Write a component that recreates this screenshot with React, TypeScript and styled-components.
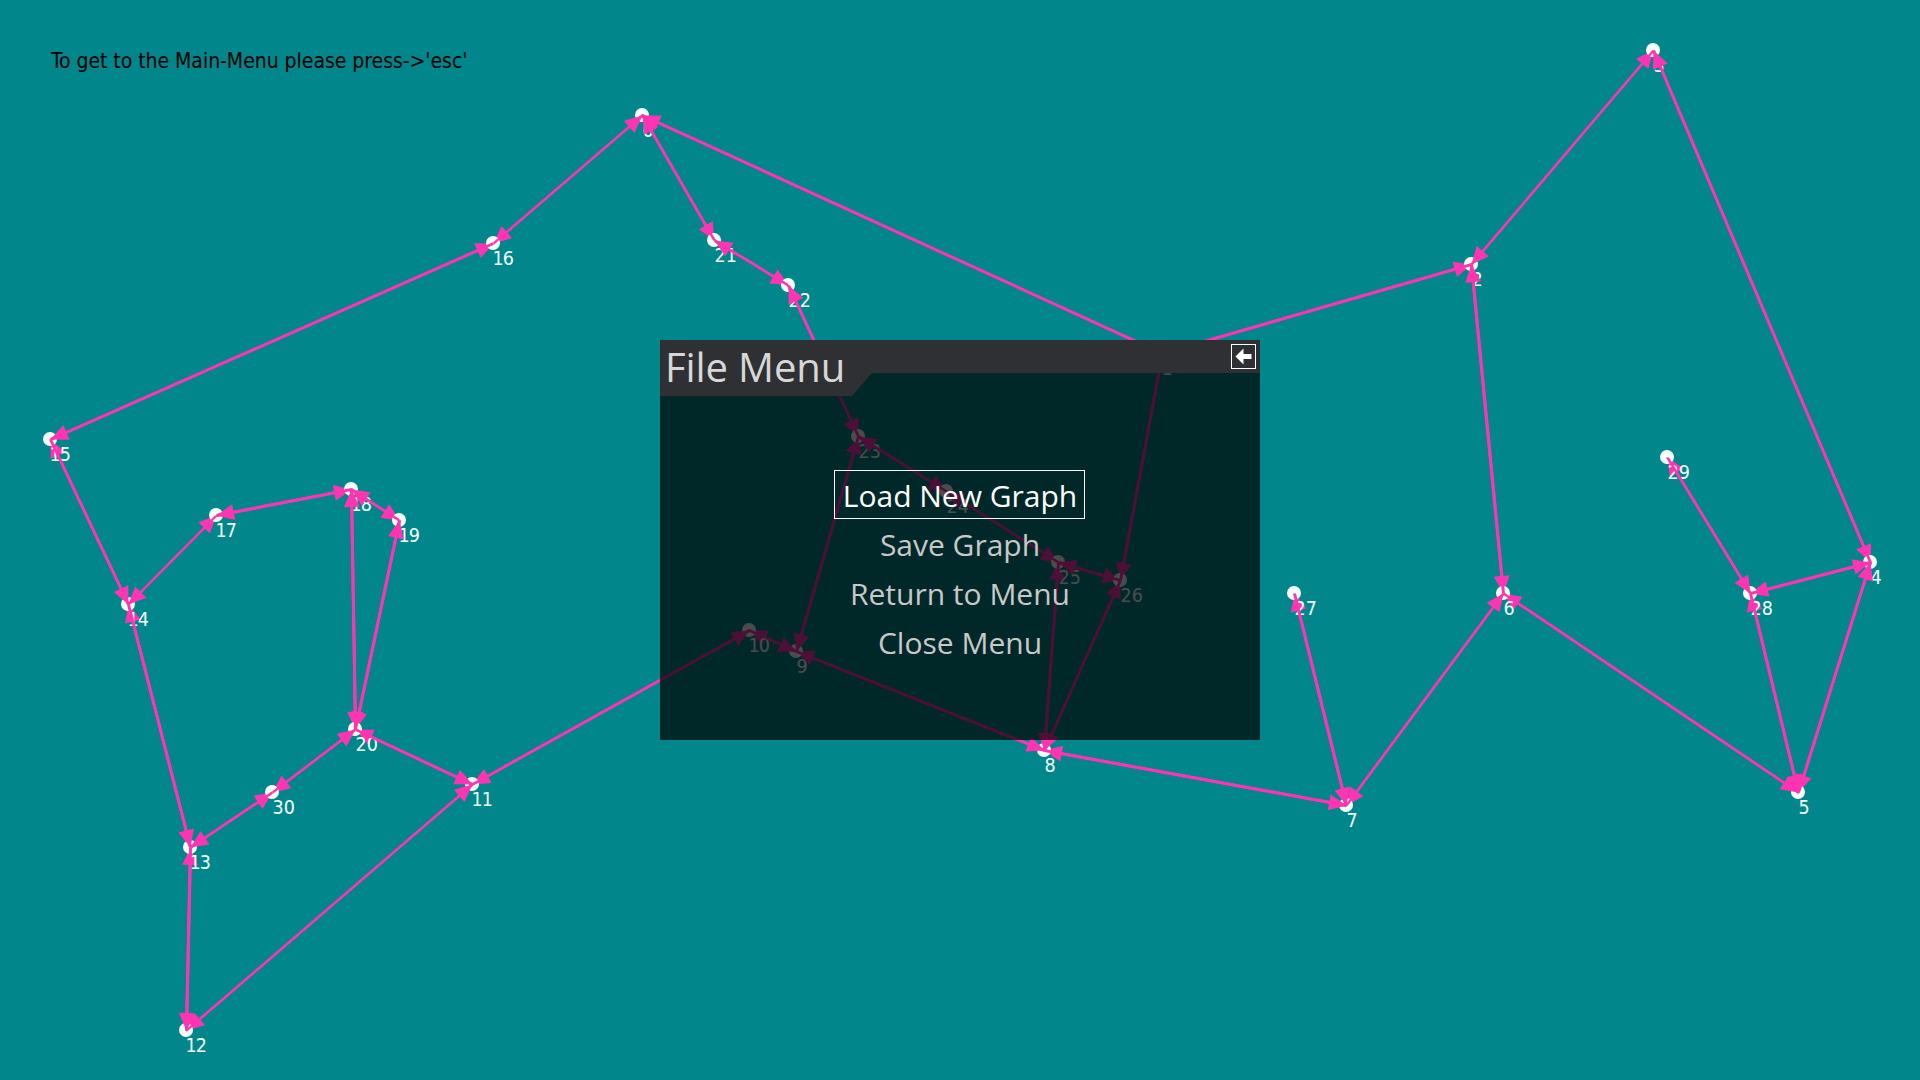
import React from "react";
import styled, { createGlobalStyle } from "styled-components";

const GlobalStyle = createGlobalStyle`
  body { margin: 0; background: #00868b; overflow: hidden; }
`;

const TEAL = "#00868b";
const PINK = "#ff34b3";
const MINT = "#f5fffa";
const HAND = `"Comic Sans MS", "DejaVu Sans Condensed", "DejaVu Sans", sans-serif`;

const Screen = styled.main`
  position: relative;
  display: grid;
  place-items: center;
  width: 1920px;
  height: 1080px;
  overflow: hidden;
  background: ${TEAL};
`;

const GraphCanvas = styled.svg`
  position: absolute;
  inset: 0;
  width: 1920px;
  height: 1080px;
`;

const NodeLabel = styled.text<{ $narrow: boolean }>`
  font-family: ${HAND};
  font-stretch: condensed;
  font-size: 19.5px;
  letter-spacing: ${(p) => (p.$narrow ? "-1px" : "0.2px")};
  fill: ${MINT};
`;

const Hint = styled.p`
  position: absolute;
  left: 51px;
  top: 46px;
  margin: 0;
  font-family: ${HAND};
  font-stretch: condensed;
  font-size: 21px;
  line-height: 30px;
  letter-spacing: -0.03px;
  white-space: nowrap;
  color: #000;
`;

const MenuWindow = styled.section`
  position: relative;
  display: flex;
  flex-direction: column;
  width: 600px;
  height: 400px;
  background: rgba(0, 0, 0, 0.7);
  font-family: "Open Sans", "Noto Sans", sans-serif;
`;

const TitleBar = styled.header`
  display: flex;
  justify-content: space-between;
  align-items: flex-start;
  height: 56px;
  box-sizing: border-box;
  padding: 4px 4px 0 5px;
  background: #2f3034;
  clip-path: polygon(0 0, 100% 0, 100% 33px, 212px 33px, 192px 100%, 0 100%);
`;

const Title = styled.h1`
  margin: 0;
  font-size: 40px;
  font-weight: 400;
  line-height: 46px;
  letter-spacing: -0.12px;
  color: #d7d7d7;
`;

const BackButton = styled.button`
  display: grid;
  place-items: center;
  width: 25px;
  height: 25px;
  padding: 0;
  border: 1px solid #fff;
  background: transparent;
`;

const MenuList = styled.nav`
  flex: 1;
  display: flex;
  flex-direction: column;
  align-items: center;
  padding: 74px 1px 0 0;
`;

const MenuItem = styled.button<{ $selected?: boolean }>`
  box-sizing: border-box;
  height: 49px;
  padding: 3px 7px 0 8px;
  border: 1px solid ${(p) => (p.$selected ? "#fff" : "transparent")};
  background: transparent;
  font: 400 30px/44px "Open Sans", "Noto Sans", sans-serif;
  color: ${(p) => (p.$selected ? "#fff" : "#c8c8c8")};
`;

const NODES: [number, number][] = [
  [642, 115], [1162, 353], [1471, 264], [1653, 50], [1870, 562],
  [1798, 792], [1503, 593], [1346, 805], [1044, 750], [796, 651],
  [749, 630], [472, 784], [186, 1030], [190, 847], [128, 604],
  [50, 439], [493, 243], [216, 515], [351, 489], [399, 520],
  [355, 729], [714, 240], [788, 285], [858, 436], [946, 491],
  [1058, 562], [1120, 580], [1294, 593], [1750, 593], [1667, 457],
  [272, 792],
];

const EDGES: [number, number][] = [
  [0, 1], [0, 16], [0, 21], [1, 2], [1, 26], [2, 3], [2, 6], [3, 4],
  [4, 5], [4, 28], [5, 6], [5, 28], [6, 7], [7, 8], [7, 27], [8, 9],
  [8, 25], [8, 26], [9, 10], [9, 23], [10, 11], [11, 12], [11, 20],
  [12, 13], [13, 14], [13, 30], [14, 15], [14, 17], [15, 16], [17, 18],
  [18, 19], [18, 20], [19, 20], [20, 30], [21, 22], [22, 23], [23, 24],
  [24, 25], [25, 26], [28, 29],
];

const HEAD_LENGTH = 17.5;
const HEAD_HALF = 8;

// Strokes have a constant thickness along the minor axis, so diagonals look thinner.
function Arrow({ from, to }: { from: number; to: number }) {
  const [x1, y1] = NODES[from].map((v) => v + 0.5);
  const [x2, y2] = NODES[to].map((v) => v + 0.5);
  const dx = x2 - x1;
  const dy = y2 - y1;
  const len = Math.hypot(dx, dy);
  const ux = dx / len;
  const uy = dy / len;
  const [ox, oy] = Math.abs(dx) > Math.abs(dy) ? [0, 1.5] : [1.5, 0];
  const bx = x2 - ux * HEAD_LENGTH;
  const by = y2 - uy * HEAD_LENGTH;
  const line = `${x1 - ox},${y1 - oy} ${x2 - ox},${y2 - oy} ${x2 + ox},${y2 + oy} ${x1 + ox},${y1 + oy}`;
  const head = `${x2},${y2} ${bx - uy * HEAD_HALF},${by + ux * HEAD_HALF} ${bx + uy * HEAD_HALF},${by - ux * HEAD_HALF}`;
  return (
    <g fill={PINK}>
      <polygon points={line} />
      <polygon points={head} />
    </g>
  );
}

function Graph() {
  return (
    <GraphCanvas viewBox="0 0 1920 1080">
      {NODES.map(([x, y], id) => {
        const narrow = id === 1 || (id >= 10 && id < 20);
        return (
          <g key={id}>
            <circle cx={x} cy={y} r={7} fill={MINT} />
            <NodeLabel $narrow={narrow} x={narrow ? x - 0.5 : x + 0.5} y={y + 22.3}>
              {id}
            </NodeLabel>
            {EDGES.filter((e) => e.includes(id)).map(([a, b]) => (
              <Arrow key={`${a}-${b}`} from={id} to={a === id ? b : a} />
            ))}
          </g>
        );
      })}
    </GraphCanvas>
  );
}

const ITEMS = ["Load New Graph", "Save Graph", "Return to Menu", "Close Menu"];

export default function App() {
  return (
    <>
      <GlobalStyle />
      <Screen>
        <Graph />
        <Hint>To get to the Main-Menu please press-&gt;'esc'</Hint>
        <MenuWindow>
          <TitleBar>
            <Title>File Menu</Title>
            <BackButton aria-label="Back">
              <svg width="17" height="17" viewBox="0 0 17 17">
                <path d="M0.5 8.5 L8.5 0.5 V6 H16.5 V11 H8.5 V16.5 Z" fill="#fff" />
              </svg>
            </BackButton>
          </TitleBar>
          <MenuList>
            {ITEMS.map((label, i) => (
              <MenuItem key={label} $selected={i === 0}>{label}</MenuItem>
            ))}
          </MenuList>
        </MenuWindow>
      </Screen>
    </>
  );
}
